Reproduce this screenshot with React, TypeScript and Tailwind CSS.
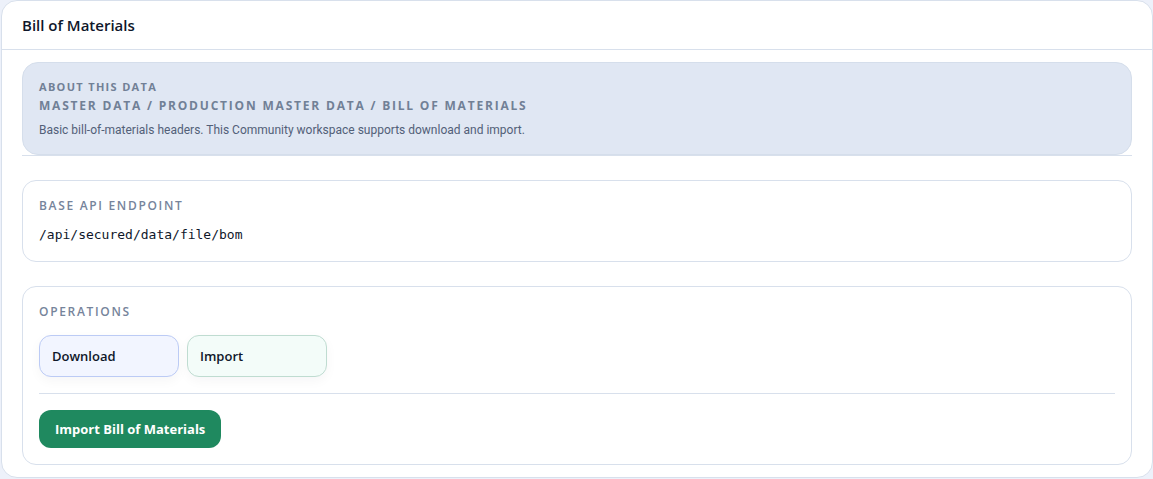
import type { ReactNode } from "react";

function Panel({ title, children }: { title: string; children: ReactNode }) {
  return (
    <section className="mt-6 rounded-[14px] border border-[#d8e0ec] bg-white p-4">
      <h2 className="text-[12px] leading-[18px] font-semibold tracking-[0.14em] text-[#76849b] uppercase">{title}</h2>
      {children}
    </section>
  );
}

export default function App() {
  return (
    <div className="bg-[#edf1fa] pb-px pl-px font-['Open_Sans','Noto_Sans',sans-serif] text-[#0f172a]">
      <main className="rounded-2xl border border-[#d8e0ec] bg-white">
        <header className="border-b border-[#d8e0ec] px-5 py-3">
          <h1 className="text-[15px] leading-6 font-semibold">Bill of Materials</h1>
        </header>
        <div className="px-5 pt-3 pb-3">
          <div className="border-b border-[#d8e0ec]">
            <section className="rounded-2xl border border-[#d5deeb] bg-[#e0e7f3] p-4 text-[#718096]">
              <h2 className="text-[11px] leading-4 font-bold tracking-[0.12em] uppercase">About this data</h2>
              <p className="mt-[3px] text-[12px] leading-4 font-bold tracking-[0.15em] uppercase">
                Master Data / Production Master Data / Bill of Materials
              </p>
              <p className="mt-2 font-['Roboto',sans-serif] text-[12px] leading-4 text-[#526078]">
                Basic bill-of-materials headers. This Community workspace supports download and import.
              </p>
            </section>
          </div>
          <Panel title="Base API Endpoint">
            <code className="mt-2.5 block font-['DejaVu_Sans_Mono',monospace] text-[13px] leading-5">
              /api/secured/data/file/bom
            </code>
          </Panel>
          <Panel title="Operations">
            <div className="mt-3.5 flex flex-wrap gap-2">
              <button
                type="button"
                className="w-[140px] rounded-xl border border-[#bccbf5] bg-[#f2f5ff] px-3 py-2.5 text-left text-[13px] leading-5 font-semibold shadow-[0_4px_12px_rgba(15,23,42,0.04)]"
              >
                Download
              </button>
              <button
                type="button"
                className="w-[140px] rounded-xl border border-[#bfdcd1] bg-[#f3fcf9] px-3 py-2.5 text-left text-[13px] leading-5 font-semibold shadow-[0_4px_12px_rgba(15,23,42,0.04)]"
              >
                Import
              </button>
            </div>
            <div className="mt-4 border-t border-[#d8e0ec] pt-4">
              <button
                type="button"
                className="rounded-xl bg-[#1f895f] px-4 py-[9px] text-[13px] leading-5 font-bold text-white"
              >
                Import Bill of Materials
              </button>
            </div>
          </Panel>
        </div>
      </main>
    </div>
  );
}
